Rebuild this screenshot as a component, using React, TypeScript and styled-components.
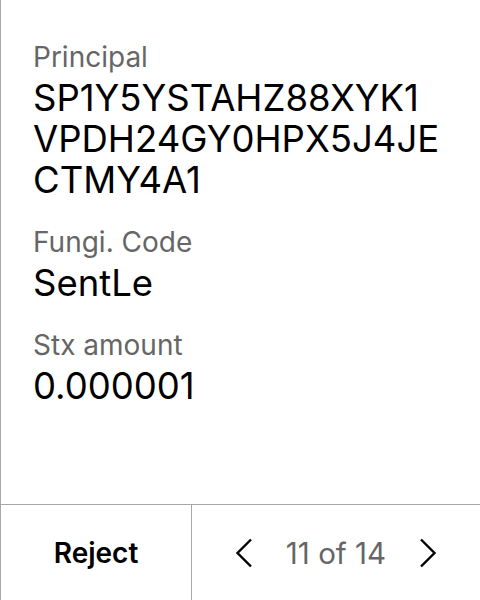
import React from "react";
import styled, { createGlobalStyle } from "styled-components";

const Global = createGlobalStyle`
  html, body { margin: 0; padding: 0; background: #fff; }
  body { font-family: Inter, "Noto Sans", sans-serif; }
`;

const Screen = styled.div`
  width: 480px;
  height: 600px;
  box-sizing: border-box;
  border-left: 1px solid #a8a8a8;
  display: flex;
  flex-direction: column;
  background: #fff;
`;

const Content = styled.div`
  flex: 1;
  padding: 40px 32px 0 32px;
  display: flex;
  flex-direction: column;
  gap: 24px;
`;

const Field = styled.div`
  display: flex;
  flex-direction: column;
  gap: 4px;
`;

const Label = styled.div`
  font-size: 28px;
  line-height: 34px;
  color: #666;
`;

const Value = styled.div`
  font-size: 36.5px;
  line-height: 41px;
  color: #000;
  word-break: break-all;
`;

const Footer = styled.div`
  height: 95px;
  border-top: 1px solid #a8a8a8;
  display: grid;
  grid-template-columns: 191px 1fr;
`;

const RejectButton = styled.div`
  display: flex;
  align-items: center;
  justify-content: center;
  border-right: 1px solid #a8a8a8;
  font-size: 28px;
  font-weight: 600;
  color: #000;
`;

const Pager = styled.div`
  display: flex;
  align-items: center;
  justify-content: center;
  gap: 33px;
`;

const PageText = styled.div`
  font-size: 29.5px;
  color: #666;
`;

const Chevron = ({ dir }: { dir: "left" | "right" }) => (
  <svg width="18" height="30" viewBox="0 0 18 30" fill="none">
    <path
      d={dir === "left" ? "M16 1.5 L2.5 15 L16 28.5" : "M2 1.5 L15.5 15 L2 28.5"}
      stroke="#000"
      strokeWidth="2.4"
    />
  </svg>
);

export default function App() {
  return (
    <>
      <Global />
      <Screen>
        <Content>
          <Field>
            <Label>Principal</Label>
            <Value>SP1Y5YSTAHZ88XYK1<br />VPDH24GY0HPX5J4JE<br />CTMY4A1</Value>
          </Field>
          <Field>
            <Label>Fungi. Code</Label>
            <Value>SentLe</Value>
          </Field>
          <Field>
            <Label>Stx amount</Label>
            <Value>0.000001</Value>
          </Field>
        </Content>
        <Footer>
          <RejectButton>Reject</RejectButton>
          <Pager>
            <Chevron dir="left" />
            <PageText>11 of 14</PageText>
            <Chevron dir="right" />
          </Pager>
        </Footer>
      </Screen>
    </>
  );
}
